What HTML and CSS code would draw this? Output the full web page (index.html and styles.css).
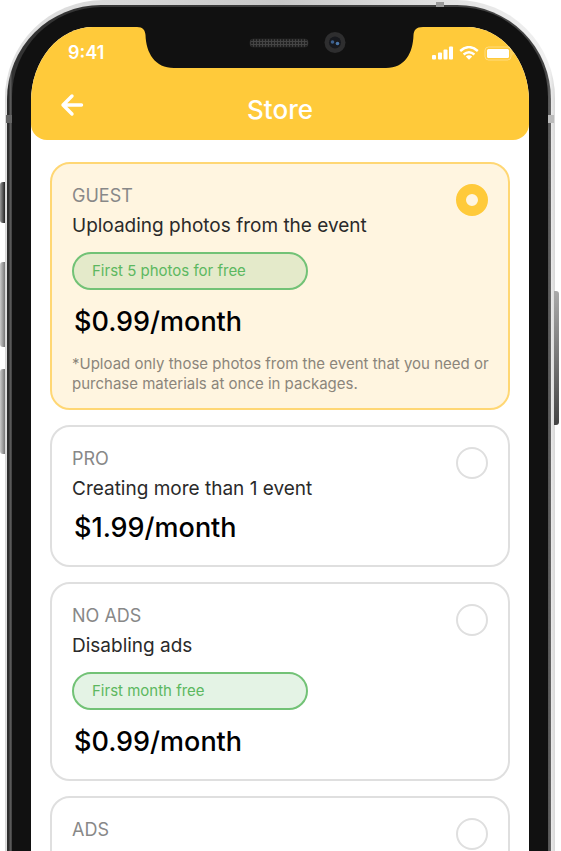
FILE: index.html
```html
<!DOCTYPE html>
<html lang="en">
<head>
<meta charset="utf-8">
<meta name="viewport" content="width=device-width, initial-scale=1">
<title>Store</title>
<link rel="stylesheet" href="styles.css">
</head>
<body>
<div class="phone">
  <span class="key key-mute"></span>
  <span class="key key-up"></span>
  <span class="key key-down"></span>
  <span class="key key-power"></span>
  <span class="antenna antenna-top"></span>
  <span class="antenna antenna-left"></span>
  <span class="antenna antenna-right"></span>
  <div class="rim"><div class="band"><div class="bezel">
    <div class="screen">
      <header class="top">
        <div class="status">
          <span class="time">9:41</span>
          <svg class="notch" viewBox="0 0 286 42" aria-hidden="true">
            <defs>
              <pattern id="mesh" width="3" height="3" patternUnits="userSpaceOnUse"><rect width="3" height="3" fill="#444"/><rect width="2" height="2" fill="#222"/></pattern>
            </defs>
            <path d="M0 0C6 0 8 3 8.500 8C9 26 18 41 37 41H249C268 41 276 26 276.500 8C277 3 279 0 286 0Z" fill="#111"/>
            <rect x="113" y="12" width="58" height="8" rx="3" fill="url(#mesh)" stroke="#2c2c2c" stroke-width=".6"/>
            <circle cx="198" cy="15.500" r="10.500" fill="#2e2e2f"/>
            <circle cx="198" cy="15.500" r="6" fill="#17191e"/>
            <circle cx="195.500" cy="15" r="1.800" fill="#3d608d"/>
            <circle cx="200.500" cy="16.500" r="1.800" fill="#4a76a8"/>
          </svg>
          <span class="signals">
            <svg width="22" height="14" viewBox="0 0 22 14" aria-hidden="true"><g fill="#fff"><rect x="0" y="9" width="4" height="4.500" rx="1"/><rect x="6" y="6.500" width="4" height="7" rx="1"/><rect x="11.500" y="3.500" width="4" height="10" rx="1"/><rect x="17" y="0.500" width="4" height="13" rx="1"/></g></svg>
            <svg width="20" height="14" viewBox="0 0 20 14" aria-hidden="true"><g fill="none" stroke="#fff" stroke-width="2.400"><path d="M1.200 5Q10-2.800 18.800 5"/><path d="M4.600 8.500Q10 3.800 15.400 8.500"/></g><path d="M6.800 10.600Q10 8 13.200 10.600L10 13.800Z" fill="#fff"/></svg>
            <svg width="31" height="15" viewBox="0 0 31 15" aria-hidden="true"><rect x="1" y="1" width="26" height="13" rx="3.500" fill="none" stroke="#fff" stroke-opacity=".35"/><rect x="3" y="3" width="22" height="9" rx="1.500" fill="#fff"/><path d="M28.500 5.500Q30.500 7.500 28.500 9.500Z" fill="#fff" fill-opacity=".35"/></svg>
          </span>
        </div>
        <div class="bar">
          <button class="back" type="button" aria-label="Back"><svg width="24" height="24" viewBox="0 0 24 24" aria-hidden="true"><path d="M21.500 12H3M12 3L3 12L12 21" fill="none" stroke="#fff" stroke-width="3.400" stroke-linecap="round" stroke-linejoin="round"/></svg></button>
          <h1>Store</h1>
        </div>
      </header>
      <main class="plans">
        <label class="card">
          <span class="info">
            <span class="tag">GUEST</span>
            <span class="name">Uploading photos from the event</span>
            <span class="badge">First 5 photos for free</span>
            <span class="price">$0.99/month</span>
            <span class="note">*Upload only those photos from the event that you need or purchase materials at once in packages.</span>
          </span>
          <input class="radio" type="radio" name="plan" checked>
        </label>
        <label class="card">
          <span class="info">
            <span class="tag">PRO</span>
            <span class="name">Creating more than 1 event</span>
            <span class="price">$1.99/month</span>
          </span>
          <input class="radio" type="radio" name="plan">
        </label>
        <label class="card">
          <span class="info">
            <span class="tag">NO ADS</span>
            <span class="name">Disabling ads</span>
            <span class="badge">First month free</span>
            <span class="price">$0.99/month</span>
          </span>
          <input class="radio" type="radio" name="plan">
        </label>
        <label class="card">
          <span class="info">
            <span class="tag">ADS</span>
            <span class="name">Lack of ad within</span>
            <span class="price">$0.99/month</span>
          </span>
          <input class="radio" type="radio" name="plan">
        </label>
      </main>
    </div>
  </div></div></div>
</div>
</body>
</html>
```
FILE: styles.css
```css
* { box-sizing: border-box; }
html, body { height: 100%; }
body {
  margin: 0;
  overflow: hidden;
  background: #fff;
  color: #2a2a2a;
  font-family: Inter, "Liberation Sans", sans-serif;
}
.phone { position: relative; padding: 0 6px 0 5px; }
.rim {
  padding: 5px 4px 0 2px;
  border-radius: 98px 98px 0 0;
  background: linear-gradient(90deg, #d4d4d4 0, #e2e2e2 2px, #c8c8c8 50%, #f1f1f1 99%, #d8d8d8 100%);
}
.band {
  padding: 2px 3px 0 5px;
  border-radius: 94px 94px 0 0;
  background: linear-gradient(90deg, #2d2d2d 0, #2d2d2d 2px, #5a5a5a 3px, #5a5a5a 4px, #333 5px, #444 99%, #666 100%);
}
.bezel {
  padding: 20px 19px 0;
  border-radius: 90px 90px 0 0;
  background: #111;
}
.screen {
  overflow: hidden;
  border-radius: 62px 62px 0 0 / 74px 74px 0 0;
  background: #fff;
}
.key { position: absolute; left: 0; width: 5px; border-radius: 3px 0 0 3px; background: linear-gradient(90deg, #ccc, #777); }
.key-mute { top: 182px; height: 41px; background: linear-gradient(90deg, #999, #222); }
.key-up { top: 262px; height: 85px; }
.key-down { top: 369px; height: 85px; }
.key-power { top: 291px; left: auto; right: 2px; height: 134px; border-radius: 0 3px 3px 0; background: linear-gradient(#aaa, #777 50%, #444); }
.antenna { position: absolute; background: #999; }
.antenna-top { top: 2px; right: 117px; width: 8px; height: 5px; }
.antenna-left { top: 115px; left: 6px; width: 6px; height: 8px; background: #666; }
.antenna-right { top: 115px; right: 7px; width: 6px; height: 8px; background: #bbb; }

.top { border-radius: 0 0 16px 16px; background: #ffca3a; color: #fff; }
.status { display: grid; grid-template-columns: 1fr 286px 1fr; height: 42px; }
.time { padding: 14px 0 0 37px; font-size: 18px; line-height: 24px; font-weight: 600; }
.notch { display: block; width: 286px; height: 42px; }
.signals { display: flex; gap: 5px; justify-content: flex-end; align-items: center; padding: 10px 14px 0 0; }
.signals svg { flex: none; }
.bar { display: grid; grid-template-columns: 24px 1fr 24px; padding: 24px 29px 23px; }
.back { height: 24px; margin: 0; padding: 0; border: 0; background: none; color: inherit; cursor: pointer; }
.back svg { display: block; }
h1 { height: 18px; margin: 0; font-size: 26px; line-height: 34px; font-weight: 500; text-align: center; }

.plans { display: flex; flex-direction: column; gap: 15px; padding: 22px 19px; }
.card {
  display: grid;
  grid-template-columns: 1fr 40px;
  padding: 17px 12px 14px 20px;
  border: 2px solid #dfdfdf;
  border-radius: 20px;
  cursor: pointer;
}
.card:has(:checked) { border-color: #ffd774; background: #fff5e0; }
.info { display: flex; flex-direction: column; grid-area: 1 / 1 / 2 / 3; }
.tag { font-size: 18px; line-height: 30px; color: #888; }
.name { font-size: 19px; line-height: 30px; }
.badge {
  width: 236px;
  margin: 11px 0 8px;
  padding: 0 18px;
  border: 2px solid #72c276;
  border-radius: 19px;
  background: rgba(76, 175, 80, .15);
  color: #5cb860;
  font-size: 15px;
  line-height: 34px;
}
.price { margin: 8px 0 7px; padding-left: 2px; font-size: 27px; line-height: 32px; font-weight: 500; color: #000; }
.note { margin-top: 9px; font-size: 15px; line-height: 20px; color: #8b857b; }
.radio {
  grid-area: 1 / 2;
  appearance: none;
  width: 32px;
  height: 32px;
  margin: 3px 0 0;
  border: 2px solid #dfdfdf;
  border-radius: 50%;
}
.radio:checked { border: 10px solid #ffca3a; }
```
